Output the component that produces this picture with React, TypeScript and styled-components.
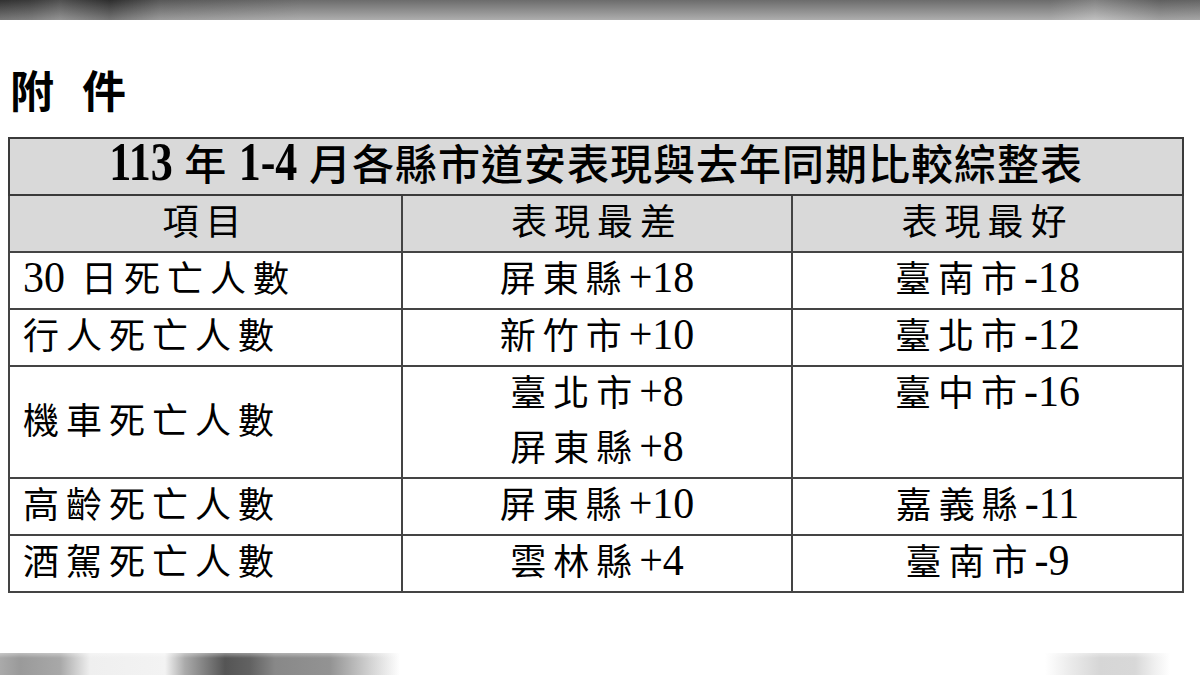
import * as React from 'react';
import styled, { createGlobalStyle } from 'styled-components';

const GlobalStyle = createGlobalStyle`
    html, body {
        margin: 0;
        padding: 0;
        background: #fff;
    }
    body {
        font-family: "Liberation Serif", "Noto Sans CJK TC", serif;
        color: #000;
    }
`;

const Page = styled.div`
    width: 1200px;
    height: 675px;
    display: flex;
    flex-direction: column;
    overflow: hidden;
    background: #fff;
`;

const TopBand = styled.div`
    height: 20px;
    flex: none;
    background:
        linear-gradient(to bottom, rgba(0, 0, 0, 0.22), rgba(255, 255, 255, 0.3)),
        linear-gradient(
            to right,
            #3e3e3e 0,
            #4a4a4a 30px,
            #666 60px,
            #3a3a3a 110px,
            #707070 160px,
            #8a8a8a 300px,
            #8a8a8a 1050px,
            #a6a6a6 1095px,
            #7a7a7a 1160px,
            #808080 1200px
        );
`;

const BottomBand = styled.div`
    height: 22px;
    flex: none;
    margin-top: auto;
    background:
        linear-gradient(to bottom, rgba(255, 255, 255, 0.35), rgba(255, 255, 255, 0) 5px),
        linear-gradient(
            to right,
            #aaa 0,
            #9a9a9a 20px,
            #a8a8a8 60px,
            #efefef 90px,
            #f3f3f3 165px,
            #aaa 185px,
            #555 225px,
            #626262 250px,
            #888 275px,
            #939393 330px,
            #d2d2d2 370px,
            #fff 400px,
            #fff 1045px,
            #ebebeb 1070px,
            #d6d6d6 1100px,
            #d8d8d8 1135px,
            #f0f0f0 1155px,
            #fff 1170px
        );
`;

const Sheet = styled.main`
    display: flex;
    flex-direction: column;
    align-items: flex-start;
    padding: 47px 18px 0 8px;
`;

const Heading = styled.h1`
    margin: 0 0 26px 2px;
    font-family: "Noto Sans CJK TC", sans-serif;
    font-weight: 700;
    font-size: 44px;
    line-height: 44px;
    letter-spacing: 9px;
    white-space: pre;
`;

const Table = styled.table`
    width: 1174px;
    table-layout: fixed;
    border-collapse: collapse;
    border: 2px solid #3a3a3a;
`;

type CellProps = { $align?: 'left' | 'center'; $valign?: 'top' | 'middle'; $shade?: boolean };
const Cell = styled.td<CellProps>`
    border: 2px solid #444;
    height: 54px;
    padding: 0 0 0 ${(props: CellProps) => (props.$align === 'left' ? '13px' : '0')};
    text-align: ${(props: CellProps) => props.$align ?? 'center'};
    vertical-align: ${(props: CellProps) => props.$valign ?? 'middle'};
    background: ${(props: CellProps) => (props.$shade ? '#d9d9d9' : '#fff')};
    font-size: 36px;
    line-height: 55px;
    letter-spacing: 7px;
    white-space: nowrap;
`;

const TitleCell = styled.th`
    border: 2px solid #3a3a3a;
    height: 55px;
    padding: 0;
    background: #d9d9d9;
    font-family: "Liberation Serif", "Noto Sans CJK TC", serif;
    font-weight: 500;
    font-size: 42px;
    line-height: 55px;
    letter-spacing: 1px;
    white-space: nowrap;
`;

type NumProps = { $title?: boolean };
const Num = styled.span<NumProps>`
    display: inline-block;
    font-family: "Liberation Serif", serif;
    font-weight: ${(props: NumProps) => (props.$title ? 700 : 400)};
    font-size: ${(props: NumProps) => (props.$title ? '44px' : '42px')};
    line-height: 1;
    letter-spacing: 0;
    transform: scaleY(${(props: NumProps) => (props.$title ? 1.25 : 1.05)});
    transform-origin: 50% 80%;
`;

const Line = styled.div`
    line-height: 55px;
`;

function fmt(text: string, title = false): React.ReactNode[] {
    return text
        .split(/([0-9+\-]+)/)
        .filter((part) => part !== '')
        .map((part, i) =>
            /[0-9+\-]/.test(part) ? (
                <Num key={i} $title={title}>
                    {part}
                </Num>
            ) : (
                <React.Fragment key={i}>{part}</React.Fragment>
            ),
        );
}

interface Row {
    item: string;
    worst: string[];
    best: string;
}

const rows: Row[] = [
    { item: '30 日死亡人數', worst: ['屏東縣+18'], best: '臺南市-18' },
    { item: '行人死亡人數', worst: ['新竹市+10'], best: '臺北市-12' },
    { item: '機車死亡人數', worst: ['臺北市+8', '屏東縣+8'], best: '臺中市-16' },
    { item: '高齡死亡人數', worst: ['屏東縣+10'], best: '嘉義縣-11' },
    { item: '酒駕死亡人數', worst: ['雲林縣+4'], best: '臺南市-9' },
];

export default function App(): React.ReactElement {
    return (
        <Page>
            <GlobalStyle />
            <TopBand />
            <Sheet>
                <Heading>附 件</Heading>
                <Table>
                    <colgroup>
                        <col style={{ width: 393 }} />
                        <col style={{ width: 390 }} />
                        <col style={{ width: 391 }} />
                    </colgroup>
                    <thead>
                        <tr>
                            <TitleCell colSpan={3}>{fmt('113 年 1-4 月各縣市道安表現與去年同期比較綜整表', true)}</TitleCell>
                        </tr>
                        <tr>
                            <Cell $shade>項目</Cell>
                            <Cell $shade>表現最差</Cell>
                            <Cell $shade>表現最好</Cell>
                        </tr>
                    </thead>
                    <tbody>
                        {rows.map((row) => {
                            const multi = row.worst.length > 1;
                            return (
                                <tr key={row.item}>
                                    <Cell $align="left">{fmt(row.item)}</Cell>
                                    <Cell>
                                        {row.worst.map((w) => (
                                            <Line key={w}>{fmt(w)}</Line>
                                        ))}
                                    </Cell>
                                    <Cell $valign={multi ? 'top' : 'middle'}>{fmt(row.best)}</Cell>
                                </tr>
                            );
                        })}
                    </tbody>
                </Table>
            </Sheet>
            <BottomBand />
        </Page>
    );
}
